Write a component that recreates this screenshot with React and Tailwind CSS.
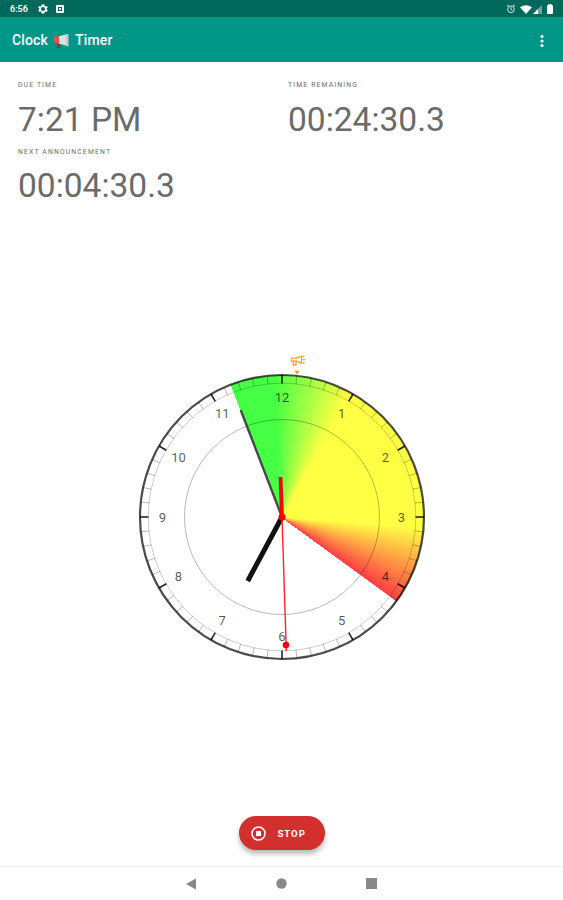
const C = 150;

function polar(deg, r) {
  const a = (deg * Math.PI) / 180;
  return [C + Math.sin(a) * r, C - Math.cos(a) * r];
}

function StatusBar() {
  return (
    <div className="flex h-[17px] items-center bg-[#00695c] pr-[10px] pl-[10px] text-white">
      <span className="w-[21px] pt-[2px] text-[9px] leading-none font-semibold">6:56</span>
      <svg className="ml-[6px] mt-px h-3 w-3" viewBox="0 0 24 24" fill="currentColor">
        <path
          fillRule="evenodd"
          d="M19.4 13a7.5 7.5 0 0 0 0-2l2.1-1.7-2-3.5-2.5 1a7.5 7.5 0 0 0-1.7-1L14.9 3H9.1l-.4 2.8a7.5 7.5 0 0 0-1.7 1l-2.5-1-2 3.5L4.6 11a7.5 7.5 0 0 0 0 2l-2.1 1.7 2 3.5 2.5-1a7.5 7.5 0 0 0 1.7 1l.4 2.8h5.8l.4-2.8a7.5 7.5 0 0 0 1.7-1l2.5 1 2-3.5zM12 16a4 4 0 1 1 0-8 4 4 0 0 1 0 8z"
        />
      </svg>
      <svg className="ml-[7px] mt-px h-2 w-2" viewBox="0 0 8 8">
        <rect width="8" height="8" rx="1" fill="#fff" />
        <rect x="2" y="2" width="4" height="4" fill="#00695c" />
        <rect x="3" y="3" width="2" height="2" fill="#fff" />
      </svg>
      <div className="ml-auto flex items-center pt-px">
        <svg className="h-[10px] w-[10px]" viewBox="0 0 10 10" fill="none" stroke="#d5e8e5">
          <circle cx="5" cy="5.3" r="3.3" />
          <path d="M1 2.3 3 .8M9 2.3 7 .8M5 3.3v2.2l1.3.8" />
        </svg>
        <svg className="ml-1 h-[9px] w-[12px]" viewBox="0 0 12 9">
          <path d="M0 2.2Q6-1.6 12 2.2L6 9z" fill="#fff" />
        </svg>
        <svg className="ml-px h-[9px] w-[9px]" viewBox="0 0 9 9">
          <path d="M9 0v9H0z" fill="#6aa69f" />
          <path d="M5 4v5H0z" fill="#fff" />
        </svg>
        <svg className="ml-[5px] h-[10px] w-[6px]" viewBox="0 0 6 10" fill="#fff">
          <rect y="1" width="6" height="9" rx="1" />
          <rect x="1.5" width="3" height="2" />
        </svg>
      </div>
    </div>
  );
}

function AppBar() {
  return (
    <header className="flex h-[45px] items-center bg-[#009688] pt-[2px] pr-[19px] pl-[12px] text-[14px] font-medium text-white">
      <span className="w-[37px] tracking-[0.15px]">Clock</span>
      <svg className="ml-[4px] h-[16px] w-[17px]" viewBox="0 0 17 16">
        <path d="M3.2 9h3.2l.8 6H4.2z" fill="#8d3634" />
        <path d="M1.5 4 6 3v8L1.5 10.2Q-.3 7.2 1.5 4z" fill="#e5504a" />
        <path d="M6 3.3 15 1v12.3L6 10.5z" fill="#dfe3e3" />
        <path d="M12.5 1.6 15.5 1v12.5l-3-1z" fill="#c4cccd" />
      </svg>
      <span className="ml-[5px] tracking-[0.15px]">Timer</span>
      <svg className="ml-auto h-[14px] w-[4px]" viewBox="0 0 4 14" fill="#fff">
        <circle cx="2" cy="2.5" r="1.6" />
        <circle cx="2" cy="7" r="1.6" />
        <circle cx="2" cy="11.5" r="1.6" />
      </svg>
    </header>
  );
}

function Reading({ label, value }) {
  return (
    <div className="h-[66.5px] w-[270px] text-[#6b6b6b]">
      <div className="h-[9px] text-[6.8px] leading-[10px] tracking-[1.15px] whitespace-nowrap">{label}</div>
      <div className="mt-[10.5px] text-[33.5px] leading-[40px] whitespace-nowrap">{value}</div>
    </div>
  );
}

function Clock() {
  const numbers = Array.from({ length: 12 }, (_, i) => i + 1);
  const ticks = Array.from({ length: 60 }, (_, i) => i);
  return (
    <div className="grid h-[334px] w-[300px] place-items-center">
      <div className="col-start-1 row-start-1 h-[285px] w-[285px] rounded-full bg-[conic-gradient(from_-21deg,#44ff44_0deg,#44ff44_17deg,#ffff44_50deg,#ffff44_115deg,#ff4444_146deg,#ff4444_147deg,transparent_147.2deg)]" />
      <svg className="col-start-1 row-start-1 h-[334px] w-[300px]" viewBox="0 -17 300 334">
        <circle cx={C} cy={C} r="142" fill="none" stroke="#000" strokeOpacity=".7" strokeWidth="2.2" />
        <circle cx={C} cy={C} r="133.8" fill="none" stroke="#000" strokeOpacity=".25" strokeWidth=".8" />
        <circle cx={C} cy={C} r="97.5" fill="none" stroke="#000" strokeOpacity=".35" strokeWidth=".8" />
        {ticks.map((t) => {
          const major = t % 5 === 0;
          const [x1, y1] = polar(t * 6, 142);
          const [x2, y2] = polar(t * 6, 133.5);
          return (
            <line key={t} x1={x1} y1={y1} x2={x2} y2={y2} stroke="#000" strokeOpacity={major ? 0.85 : 0.35} strokeWidth={major ? 1.6 : 0.8} />
          );
        })}
        {numbers.map((n) => {
          const [x, y] = polar(n * 30, 119.5);
          return (
            <text key={n} x={x} y={y + 4.7} textAnchor="middle" className="text-[13px]" fill="#000" fillOpacity=".66">
              {n}
            </text>
          );
        })}
        <g fill="none" stroke="#ff9c2a" strokeWidth="1.3" strokeLinejoin="round" strokeLinecap="round">
          <path d="M159.5 -8.800h5l5-2.200v7.500l-5-2.300h-5zM161.300 -5.800v3.800h2.700v-3.800" />
          <path d="M171 -7.300h1.500M171 -10.500l1-.5M171 -4.300l1 .5" />
        </g>
        <path d="M162.3 3.8h5.4L165 7.500z" fill="#ff9820" />
        <line x1={C} y1={C} x2="115.7" y2="214" stroke="#111" strokeWidth="5" />
        <line x1={C} y1={C} x2="108.7" y2="43" stroke="#484848" strokeWidth="2.4" />
        <line x1={C} y1={C} x2="148.5" y2="110" stroke="#f00" strokeWidth="3.8" />
        <line x1={C} y1={C} x2="154.3" y2="284" stroke="#f22" strokeWidth="1.4" />
        <circle cx={C} cy={C} r="3.5" fill="#f00" />
        <circle cx="154" cy="278" r="3.3" fill="#f00" />
      </svg>
    </div>
  );
}

export default function App() {
  return (
    <div className="flex h-[900px] w-[563px] flex-col overflow-hidden bg-white font-['Roboto',sans-serif]">
      <StatusBar />
      <AppBar />
      <section className="flex h-[151px] flex-wrap content-start pt-[18px] pl-[18px]">
        <Reading label="DUE TIME" value="7:21 PM" />
        <Reading label="TIME REMAINING" value="00:24:30.3" />
        <Reading label="NEXT ANNOUNCEMENT" value="00:04:30.3" />
      </section>
      <main className="flex h-[603px] justify-center pt-[137px]">
        <Clock />
      </main>
      <div className="flex h-[50px] justify-center">
        <button className="flex h-[34px] w-[86px] items-center rounded-full bg-[#d32f2f] pl-[12px] text-white shadow-[0_4px_5px_rgba(0,0,0,0.28)]">
          <svg className="h-[15px] w-[15px]" viewBox="0 0 15 15">
            <circle cx="7.5" cy="7.5" r="6.5" fill="none" stroke="#fff" strokeWidth="1.5" />
            <rect x="5" y="5" width="5" height="5" rx=".5" fill="#fff" />
          </svg>
          <span className="ml-[12px] pt-px text-[9.5px] leading-none font-bold tracking-[1px]">STOP</span>
        </button>
      </div>
      <nav className="flex flex-1 items-center justify-center gap-[79px] border-t border-[#eee] text-[#888]">
        <svg className="h-3 w-[11px]" viewBox="0 0 11 12" fill="currentColor">
          <path d="M0 6 10 .5v11z" />
        </svg>
        <svg className="h-[11px] w-[11px]" viewBox="0 0 11 11" fill="currentColor">
          <circle cx="5.5" cy="5.5" r="5.2" />
        </svg>
        <svg className="h-[11px] w-[11px]" viewBox="0 0 11 11" fill="currentColor">
          <rect width="11" height="11" />
        </svg>
      </nav>
    </div>
  );
}
